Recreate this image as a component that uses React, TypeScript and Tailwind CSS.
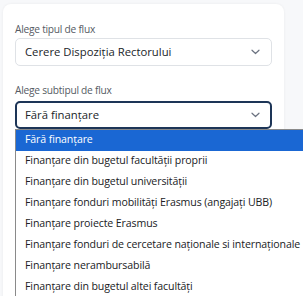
import React from "react";

const subtipuri = [
  "Fără finanțare",
  "Finanțare din bugetul facultății proprii",
  "Finanțare din bugetul universității",
  "Finanțare fonduri mobilități Erasmus (angajați UBB)",
  "Finanțare proiecte Erasmus",
  "Finanțare fonduri de cercetare naționale si internaționale",
  "Finanțare nerambursabilă",
  "Finanțare din bugetul altei facultăți",
];

function Chevron() {
  return (
    <svg width="9" height="6" viewBox="0 0 9 6" fill="none" className="text-[#6b7280]">
      <path d="M1 1.2l3.5 3.3L8 1.2" stroke="currentColor" strokeWidth="1.2" strokeLinecap="round" strokeLinejoin="round" />
    </svg>
  );
}

export default function App() {
  return (
    <div className="relative h-[296px] w-[303px] overflow-hidden bg-[#f7f8fa] font-['Open_Sans',sans-serif]">
      {/* card */}
      <div className="ml-[3px] mt-[4px] h-[400px] w-[281px] rounded-[8px] bg-white px-[12px] pt-[18px] shadow-[0_0_3px_rgba(0,0,0,0.06)]">
        <p className="mb-[2px] text-[10.2px] leading-[14px] tracking-[-0.25px] text-[#555b63]">Alege tipul de flux</p>
        <div className="flex h-[28px] items-center justify-between rounded-[5px] border border-[#dfe2e6] pl-[9px] pr-[11px]">
          <span className="text-[11.3px] text-[#212529]">Cerere Dispoziția Rectorului</span>
          <Chevron />
        </div>

        <p className="mb-[4px] mt-[17px] text-[10.2px] leading-[14px] tracking-[-0.25px] text-[#555b63]">Alege subtipul de flux</p>
        <div className="relative">
          <div className="flex h-[28px] items-center justify-between rounded-[5px] border-2 border-[#1d3557] pl-[8px] pr-[10px]">
            <span className="text-[11.3px] text-[#212529]">Fără finanțare</span>
            <Chevron />
          </div>

          {/* lista deschisa */}
          <ul className="absolute left-0 top-[28px] w-[300px] border border-[#8a8a8a] bg-white">
            {subtipuri.map((s, i) => (
              <li
                key={s}
                className={
                  i === 0
                    ? "flex h-[20.86px] items-center bg-[#1a67d3] pl-[9px] text-[10.6px] tracking-[-0.12px] whitespace-nowrap text-white"
                    : "flex h-[20.86px] items-center pl-[9px] text-[10.6px] tracking-[-0.12px] whitespace-nowrap text-[#202124]"
                }
              >
                {s}
              </li>
            ))}
          </ul>
        </div>
      </div>
    </div>
  );
}
